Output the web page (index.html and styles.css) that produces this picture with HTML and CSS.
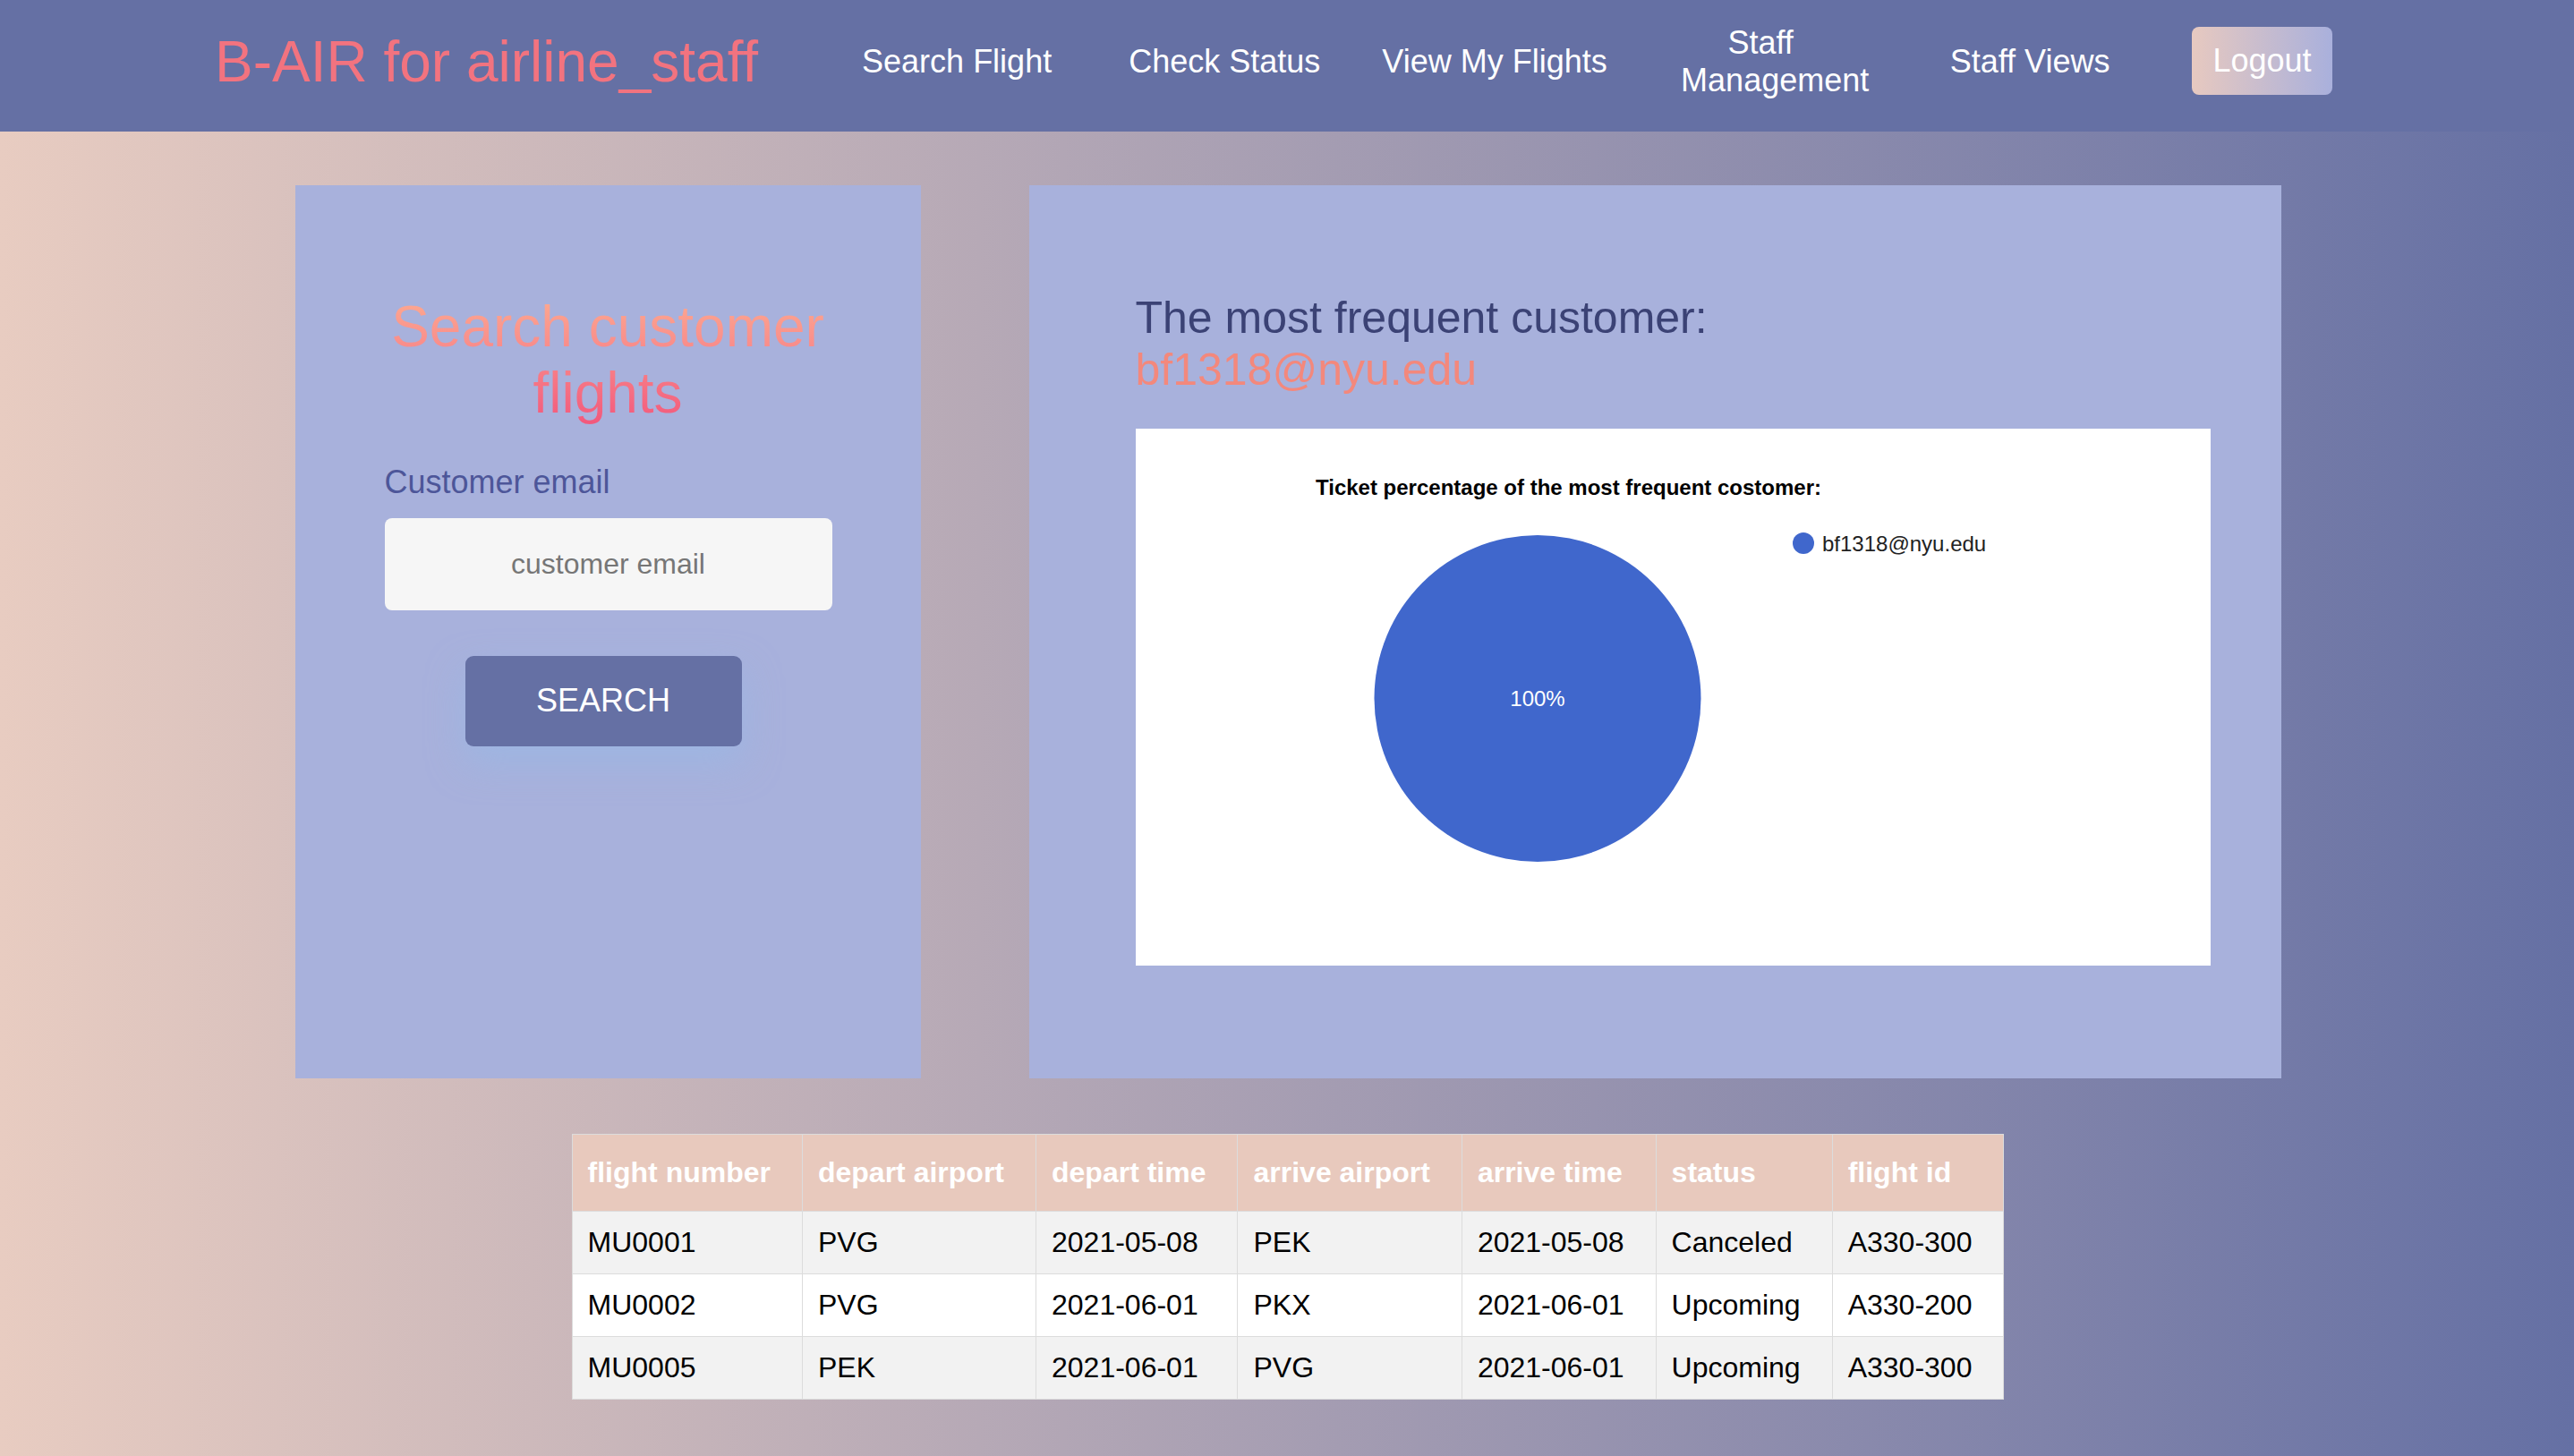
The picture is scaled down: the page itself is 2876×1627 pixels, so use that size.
FILE: index.html
```html
<!DOCTYPE html>
<html lang="en">
<head>
<meta charset="utf-8">
<title>B-AIR for airline_staff</title>
<link rel="stylesheet" href="styles.css">
</head>
<body>
<header class="topbar">
  <div class="brand">B-AIR for airline_staff</div>
  <nav class="links">
    <a class="link l-search" href="#">Search Flight</a>
    <a class="link l-status" href="#">Check Status</a>
    <a class="link l-mine" href="#">View My Flights</a>
    <a class="link l-manage" href="#"><span class="first-word">Staff</span> Management</a>
    <a class="link l-views" href="#">Staff Views</a>
    <a class="logout" href="#">Logout</a>
  </nav>
</header>
<main class="page">
  <section class="panels">
    <div class="panel search-panel">
      <h1 class="search-title">Search customer flights</h1>
      <label class="field-label" for="email">Customer email</label>
      <input class="field-input" id="email" type="text" placeholder="customer email">
      <button class="search-btn" type="button">SEARCH</button>
    </div>
    <div class="panel freq-panel">
      <h2 class="freq-title">The most frequent customer:<span class="freq-email">bf1318@nyu.edu</span></h2>
      <div class="chart">
        <svg class="chart-svg" width="1201" height="600" viewBox="0 0 1201 600">
          <rect x="0" y="0" width="1201" height="600" fill="#ffffff"/>
          <text class="chart-title" x="201" y="74">Ticket percentage of the most frequent costomer:</text>
          <circle cx="449" cy="301.5" r="182.5" fill="#4067cc"/>
          <text class="slice-label" x="449" y="310" text-anchor="middle">100%</text>
          <circle cx="746" cy="128" r="12" fill="#4067cc"/>
          <text class="legend-label" x="767" y="136.5">bf1318@nyu.edu</text>
        </svg>
      </div>
    </div>
  </section>
  <table class="flights">
    <thead>
      <tr>
        <th>flight number</th>
        <th>depart airport</th>
        <th>depart time</th>
        <th>arrive airport</th>
        <th>arrive time</th>
        <th>status</th>
        <th>flight id</th>
      </tr>
    </thead>
    <tbody>
      <tr>
        <td>MU0001</td><td>PVG</td><td>2021-05-08</td><td>PEK</td><td>2021-05-08</td><td>Canceled</td><td>A330-300</td>
      </tr>
      <tr>
        <td>MU0002</td><td>PVG</td><td>2021-06-01</td><td>PKX</td><td>2021-06-01</td><td>Upcoming</td><td>A330-200</td>
      </tr>
      <tr>
        <td>MU0005</td><td>PEK</td><td>2021-06-01</td><td>PVG</td><td>2021-06-01</td><td>Upcoming</td><td>A330-300</td>
      </tr>
    </tbody>
  </table>
</main>
</body>
</html>
```

FILE: styles.css
```css
* { box-sizing: border-box; }

html, body {
  margin: 0;
  padding: 0;
}

body {
  font-family: "Liberation Sans", Arial, Helvetica, sans-serif;
  background: linear-gradient(to right, #e8ccc1 0%, #6570a4 100%);
  min-height: 100vh;
}

/* ---------- top bar ---------- */
.topbar {
  height: 147px;
  background: #6570a4;
  display: flex;
  align-items: center;
  padding: 0 0 10px 240px;
}

.brand {
  font-size: 64px;
  color: #f2737f;
  white-space: nowrap;
}

.links {
  display: flex;
  align-items: center;
}

.link {
  color: #ffffff;
  text-decoration: none;
  font-size: 36px;
  white-space: nowrap;
}

.l-search { margin-left: 116px; }
.l-status { margin-left: 86px; }
.l-mine   { margin-left: 69px; }
.l-manage {
  margin-left: 82px;
  width: 211px;
  white-space: normal;
  text-align: center;
}
.first-word { padding-right: 32px; }
.l-views  { margin-left: 90px; }

.logout {
  margin-left: 92px;
  margin-top: -2px;
  display: block;
  font-size: 36px;
  color: #ffffff;
  text-decoration: none;
  padding: 17px 23px;
  border-radius: 8px;
  background: linear-gradient(to right, #e7c9c0, #a9b0dc);
}

/* ---------- main ---------- */
.page {
  padding: 60px 0 63px;
}

.panels {
  display: flex;
  justify-content: center;
  gap: 121px;
  padding-left: 2px;
}

.panel {
  background: #a8b1dc;
  height: 998px;
}

.search-panel {
  width: 699px;
  padding: 122px 100px 0;
  display: flex;
  flex-direction: column;
  align-items: stretch;
}

.search-title {
  margin: 0;
  font-size: 64px;
  font-weight: normal;
  text-align: center;
  line-height: 73.5px;
  background: linear-gradient(to bottom, #fdab91 0%, #f8888a 45%, #f2577c 100%);
  -webkit-background-clip: text;
  background-clip: text;
  color: transparent;
}

.field-label {
  margin-top: 42px;
  font-size: 36px;
  color: #4d5699;
  line-height: 41.5px;
}

.field-input {
  margin-top: 19px;
  width: 500px;
  height: 103px;
  border: none;
  border-radius: 8px;
  background: #f6f6f6;
  font-family: "Liberation Sans", Arial, Helvetica, sans-serif;
  font-size: 32px;
  text-align: center;
  color: #333;
  outline: none;
}

.field-input::placeholder {
  color: #767676;
}

.search-btn {
  margin: 51px auto 0;
  position: relative;
  left: -5px;
  width: 309px;
  height: 101px;
  border: none;
  border-radius: 9px;
  background: #6570a4;
  color: #ffffff;
  font-family: "Liberation Sans", Arial, Helvetica, sans-serif;
  font-size: 36px;
  box-shadow: 0 18px 40px rgba(150, 185, 230, 0.6);
}

.freq-panel {
  width: 1399px;
  padding: 120px 79px 0 119px;
}

.freq-title {
  margin: 0;
  font-size: 50px;
  font-weight: normal;
  line-height: 57.5px;
  color: #3b4275;
}

.freq-email {
  display: block;
  color: #f3887c;
}

.chart {
  margin-top: 37px;
  width: 1201px;
  height: 600px;
  background: #ffffff;
}

.chart-svg {
  display: block;
}

.chart-title {
  font-family: "Liberation Sans", Arial, Helvetica, sans-serif;
  font-size: 24px;
  font-weight: bold;
  fill: #000000;
}

.slice-label {
  font-family: "Liberation Sans", Arial, Helvetica, sans-serif;
  font-size: 24px;
  fill: #ffffff;
}

.legend-label {
  font-family: "Liberation Sans", Arial, Helvetica, sans-serif;
  font-size: 24px;
  fill: #222222;
}

/* ---------- table ---------- */
.flights {
  margin: 62px auto 0;
  border-collapse: collapse;
  font-size: 32px;
  border: 1px solid #dcdcdc;
  position: relative;
  left: 1px;
}

.flights th,
.flights td {
  border: 1px solid #dcdcdc;
  text-align: left;
  white-space: nowrap;
  line-height: 37px;
}

.flights th {
  background: #e8c9bd;
  color: #ffffff;
  font-weight: bold;
  padding: 24px 35px 24px 17px;
}

.flights td {
  color: #000000;
  padding: 16px 35px 16px 17px;
}

.flights tbody tr:nth-child(odd) td { background: #f2f2f2; }
.flights tbody tr:nth-child(even) td { background: #ffffff; }
```
